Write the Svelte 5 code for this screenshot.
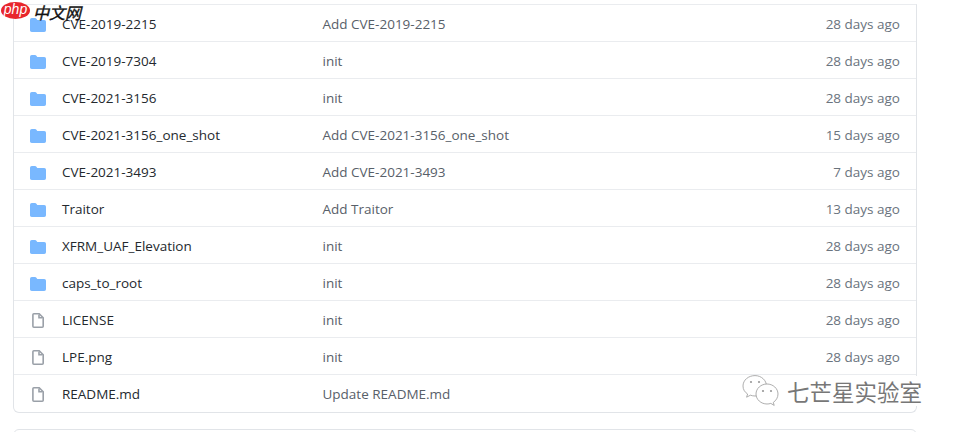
<script>
  const rows = [
    { name: "CVE-2019-2215", msg: "Add CVE-2019-2215", age: "28 days ago", dir: true },
    { name: "CVE-2019-7304", msg: "init", age: "28 days ago", dir: true },
    { name: "CVE-2021-3156", msg: "init", age: "28 days ago", dir: true },
    { name: "CVE-2021-3156_one_shot", msg: "Add CVE-2021-3156_one_shot", age: "15 days ago", dir: true },
    { name: "CVE-2021-3493", msg: "Add CVE-2021-3493", age: "7 days ago", dir: true },
    { name: "Traitor", msg: "Add Traitor", age: "13 days ago", dir: true },
    { name: "XFRM_UAF_Elevation", msg: "init", age: "28 days ago", dir: true },
    { name: "caps_to_root", msg: "init", age: "28 days ago", dir: true },
    { name: "LICENSE", msg: "init", age: "28 days ago", dir: false },
    { name: "LPE.png", msg: "init", age: "28 days ago", dir: false },
    // the age of this row is hidden under the watermark in the screenshot
    { name: "README.md", msg: "Update README.md", age: "", dir: false },
  ];
</script>

<main>
  <div class="files">
    {#each rows as row}
      <div class="row">
        <span class="icon">
          {#if row.dir}
            <svg width="16" height="16" viewBox="0 0 16 16">
              <path fill="#79b8ff" d="M1.75 1A1.75 1.75 0 0 0 0 2.75v10.5C0 14.216.784 15 1.75 15h12.5A1.75 1.75 0 0 0 16 13.25v-8.5A1.75 1.75 0 0 0 14.25 3H7.5a.25.25 0 0 1-.2-.1l-.9-1.2C6.070 1.260 5.550 1 5 1H1.750Z" />
            </svg>
          {:else}
            <svg width="16" height="16" viewBox="0 0 16 16" fill="none" stroke="#9aa0a8" stroke-width="1.6">
              <path d="M3.900 .8h5.300l4 4v8.400a1 1 0 0 1-1 1H3.900a1 1 0 0 1-1-1V1.800a1 1 0 0 1 1-1Z" />
              <path d="M9 1.500v3.300h3.500" />
            </svg>
          {/if}
        </span>
        <span class="name">{row.name}</span>
        <span class="msg">{row.msg}</span>
        <span class="age">{row.age}</span>
      </div>
    {/each}
  </div>
  <div class="next"></div>

  <div class="php-mark">
    <span class="php">php</span>
    <span class="cn">中文网</span>
  </div>

  <div class="wechat-mark">
    <svg width="37" height="32" viewBox="0 0 37 32" fill="#fff" stroke="#999" stroke-width="0.8">
      <path d="M13 .6C6.500.6 1 5 1 11c0 3.500 1.800 6.200 4.600 8l-1 3.200 3.800-2c1.500.5 3 .8 4.600.8 6.500 0 11.500-4.500 11.500-10S19.500.6 13 .6Z" />
      <path d="M25 9c-6 0-11 4.500-11 10s5 10 11 10c1.300 0 2.600-.2 3.800-.6l3.400 2-.9-3c2.800-1.800 4.700-5 4.700-8.400C36 13.500 31 9 25 9Z" />
      <circle cx="9" cy="7" r="1.100" fill="#999" stroke="none" />
      <circle cx="17" cy="7" r="1.100" fill="#999" stroke="none" />
      <circle cx="21" cy="16" r="1.100" fill="#999" stroke="none" />
      <circle cx="29" cy="16" r="1.100" fill="#999" stroke="none" />
    </svg>
    <span class="wechat-name">七芒星实验室</span>
  </div>
</main>

<style>
  :global(body) {
    background: #fff;
    overflow: hidden;
  }

  main {
    position: relative;
    width: 953px;
    height: 432px;
    overflow: hidden;
    padding: 4px 36px 0 13px;
    box-sizing: border-box;
    font-family: "Open Sans", "Noto Sans CJK SC", sans-serif;
    font-size: 13.5px;
    color: #24292e;
  }

  .files {
    border: 1px solid #e1e4e8;
    border-top-color: #eaecef;
    border-radius: 0 0 6px 6px;
  }

  .row {
    display: flex;
    align-items: center;
    height: 37px;
    box-sizing: border-box;
    padding: 2px 16px 0;
    border-bottom: 1px solid #eaecef;
  }

  .row:last-child {
    border-bottom-color: transparent;
  }

  .icon {
    width: 32px;
    display: flex;
    margin-top: 2px;
  }

  .name {
    width: 260.5px;
  }

  .msg {
    flex: 1;
    color: #586069;
  }

  .age {
    color: #6a737d;
  }

  .next {
    height: 20px;
    margin-top: 16px;
    border: 1px solid #e1e4e8;
    border-radius: 6px 6px 0 0;
  }

  .php-mark {
    position: absolute;
    left: 1px;
    top: 2px;
    display: flex;
    align-items: center;
    gap: 3px;
  }

  .php {
    background: #e8262c;
    color: #fff;
    border-radius: 50%;
    width: 29px;
    height: 17px;
    line-height: 15px;
    text-align: center;
    font-size: 14px;
    font-style: italic;
    font-family: "Liberation Sans", sans-serif;
  }

  .cn {
    font-size: 16px;
    line-height: 20px;
    height: 17px;
    font-style: italic;
    color: #111;
    -webkit-text-stroke: 0.4px #111;
    font-family: "Noto Sans CJK SC", sans-serif;
  }

  .wechat-mark {
    position: absolute;
    left: 742px;
    top: 375px;
    display: flex;
    align-items: center;
    gap: 8px;
    font-size: 22.5px;
    color: #777;
    font-family: "Noto Sans CJK SC", sans-serif;
  }

  .wechat-name {
    background: #fff;
    line-height: 30px;
    text-shadow: 0 0 1px #fff;
  }
</style>
